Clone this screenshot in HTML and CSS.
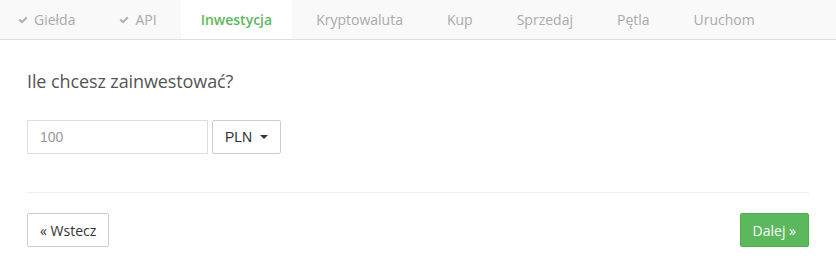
FILE: index.html
```html
<!DOCTYPE html>
<html lang="pl">
    <head>
        <meta charset="utf-8">
        <meta name="viewport" content="width=device-width, initial-scale=1">
        <title>Kreator</title>
        <link rel="stylesheet" href="styles.css">
    </head>
    <body>
        <ul class="tabs">
            <li class="tab done">
                <svg class="check" viewBox="0 0 1792 1792"><path d="M1671 566q0 40-28 68l-724 724-136 136q-28 28-68 28t-68-28l-136-136-362-362q-28-28-28-68t28-68l136-136q28-28 68-28t68 28l294 295 656-657q28-28 68-28t68 28l136 136q28 28 28 68z"/></svg>
                Giełda
            </li>
            <li class="tab done">
                <svg class="check" viewBox="0 0 1792 1792"><path d="M1671 566q0 40-28 68l-724 724-136 136q-28 28-68 28t-68-28l-136-136-362-362q-28-28-28-68t28-68l136-136q28-28 68-28t68 28l294 295 656-657q28-28 68-28t68 28l136 136q28 28 28 68z"/></svg>
                API
            </li>
            <li class="tab active">Inwestycja</li>
            <li class="tab">Kryptowaluta</li>
            <li class="tab">Kup</li>
            <li class="tab">Sprzedaj</li>
            <li class="tab">Pętla</li>
            <li class="tab">Uruchom</li>
        </ul>

        <div class="content">
            <h3 class="question">Ile chcesz zainwestować?</h3>

            <div class="amount">
                <input type="text" class="field" placeholder="100">
                <button type="button" class="btn currency">PLN <span class="caret"></span></button>
            </div>

            <hr class="divider">

            <div class="pager">
                <button type="button" class="btn">&laquo; Wstecz</button>
                <button type="button" class="btn next">Dalej &raquo;</button>
            </div>
        </div>
    </body>
</html>
```

FILE: styles.css
```css
body {
    margin: 0;
    background: #fff;
    font-family: "Open Sans", sans-serif;
    color: #555;
}

.tabs {
    display: flex;
    margin: 0;
    padding: 0;
    list-style: none;
    height: 39px;
    background: #f9f9f9;
    border-bottom: 1px solid #ddd;
}

.tabs .tab {
    display: flex;
    align-items: center;
    gap: 6px;
    padding: 0 20px;
    margin-right: 4px;
    font-size: 14px;
    color: #aaa;
}

.tabs .tab.done:first-child {
    padding-left: 18px;
}

.tabs .tab.active {
    background: #fff;
    color: #5cb85c;
    font-weight: 600;
}

.tabs .check {
    width: 10px;
    height: 10px;
    fill: #b0b0b0;
}

.content {
    padding: 0 27px;
}

.question {
    margin: 31px 0 0;
    font-size: 18px;
    letter-spacing: -0.1px;
    font-weight: normal;
    line-height: 20px;
    color: #555;
}

.amount {
    display: flex;
    gap: 4px;
    margin-top: 29px;
}

.field {
    box-sizing: border-box;
    width: 181px;
    height: 34px;
    padding: 0 12px;
    border: 1px solid #ddd;
    font-family: "Liberation Sans", Arial, sans-serif;
    font-size: 14px;
    color: #555;
}

.field::placeholder {
    color: #999;
}

.btn {
    box-sizing: border-box;
    height: 34px;
    padding: 0 12px;
    border: 1px solid #ccc;
    border-radius: 2px;
    background: #fff;
    font-family: "Open Sans", sans-serif;
    font-size: 14px;
    color: #333;
}

.btn.currency {
    display: flex;
    align-items: center;
    gap: 8px;
    width: 69px;
    font-family: "Liberation Sans", Arial, sans-serif;
}

.caret {
    width: 0;
    height: 0;
    border-top: 4px solid #333;
    border-left: 4px solid transparent;
    border-right: 4px solid transparent;
}

.divider {
    margin: 38px 0 0;
    border: 0;
    border-top: 1px solid #eee;
}

.pager {
    display: flex;
    justify-content: space-between;
    margin-top: 20px;
}

.btn.next {
    background: #5cb85c;
    border-color: #4cae4c;
    color: #fff;
}
```
